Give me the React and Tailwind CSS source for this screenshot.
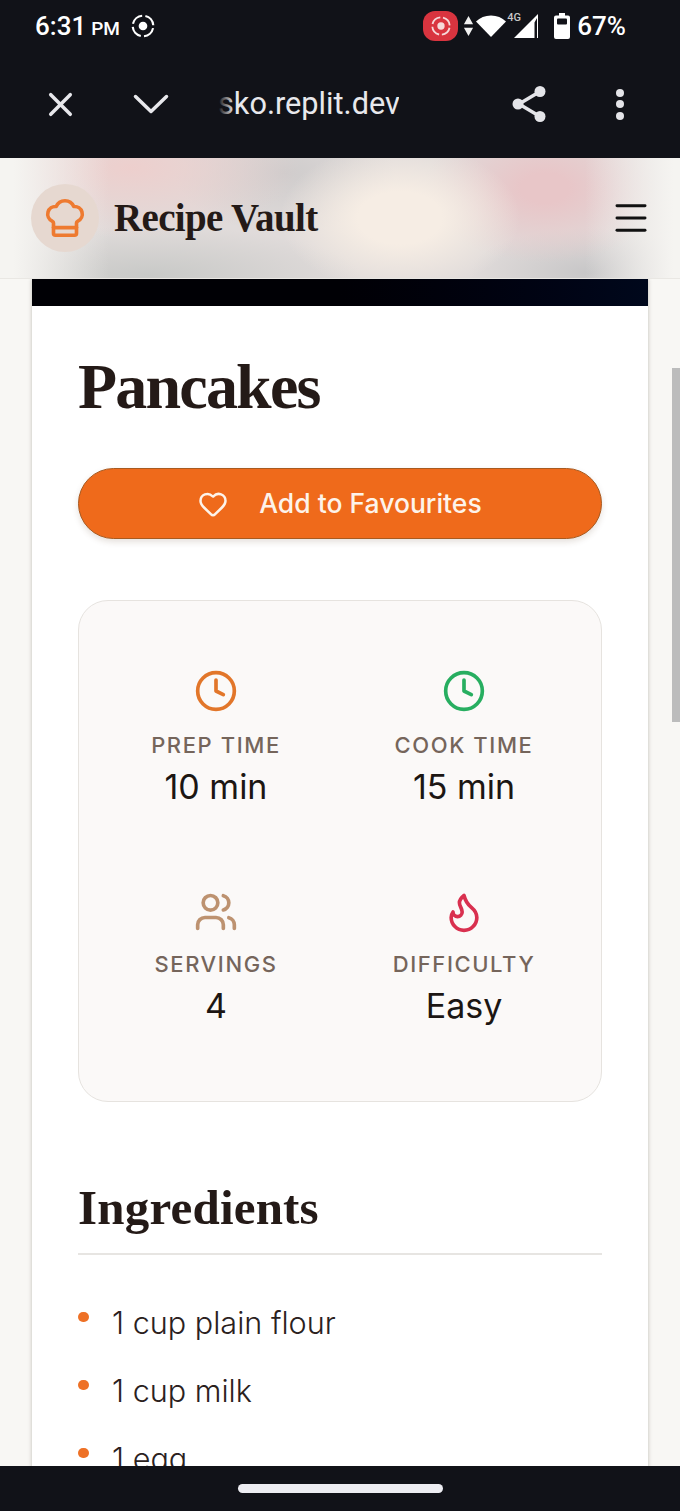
import React from "react";
import { ChefHat, Clock, Users, Flame, Heart, X, Menu } from "lucide-react";

const serif = "font-['Liberation_Serif',serif]";

function RecordIcon({ className, color = "white" }) {
  return (
    <svg viewBox="0 0 24 24" className={className} fill="none" stroke={color} strokeWidth="2">
      <circle cx="12" cy="12" r="4" fill={color} stroke="none" />
      <circle cx="12" cy="12" r="9.500" strokeDasharray="11.900 3" transform="rotate(12 12 12)" />
    </svg>
  );
}

function StatusBar() {
  return (
    <div className="flex h-[50px] items-center pl-[35px] pr-[54px] pt-px font-['Roboto',sans-serif] text-white">
      <span className="text-[26px] font-medium leading-none">6:31</span>
      <span className="ml-[5px] mt-[5px] text-[19px] font-medium leading-none">PM</span>
      <RecordIcon className="ml-[10px] h-[26px] w-[26px]" />
      <div className="ml-auto flex items-center">
        <div className="flex h-[30px] w-[35px] items-center justify-center rounded-[12px] bg-[#d9343f]">
          <RecordIcon className="h-[22px] w-[22px]" color="#f6d9da" />
        </div>
        <svg viewBox="0 0 12 24" className="ml-[5px] h-[24px] w-[11px]" fill="#f1f1f1">
          <path d="M6 1l5 9H1zM6 23l-5-9h10z" />
        </svg>
        <svg viewBox="0 0 30 24" className="ml-[2px] h-[24px] w-[30px]" fill="white">
          <path d="M15 23L0 7.500C4 3.500 9 1.500 15 1.500s11 2 15 6z" />
        </svg>
        <div className="relative h-[26px] w-[33px]">
          <span className="absolute left-[1px] top-[-1px] text-[11px] font-medium leading-none text-[#c8c8c8]">4G</span>
          <svg viewBox="0 0 26 26" className="absolute right-0 top-0 h-[26px] w-[26px]" fill="white">
            <path d="M25 1v24H1zM21.500 9.500L21.500 25H24V5z" fillRule="evenodd" />
          </svg>
        </div>
        <svg viewBox="0 0 16 26" className="ml-[15px] h-[26px] w-[16px]" fill="white">
          <path d="M5 0h6v2.500h3a2 2 0 0 1 2 2V24a2 2 0 0 1-2 2H2a2 2 0 0 1-2-2V4.500a2 2 0 0 1 2-2h3z" />
          <rect x="3" y="5.500" width="10" height="6" rx="1" fill="#111218" />
        </svg>
        <span className="ml-[7px] text-[26px] font-medium leading-none">67%</span>
      </div>
    </div>
  );
}

function BrowserBar() {
  return (
    <div className="flex h-[108px] items-center font-['Roboto',sans-serif] text-[#e8e8ec]">
      <X className="ml-[41px] h-[39px] w-[39px]" strokeWidth={2.2} />
      <svg viewBox="0 0 38 24" className="ml-[52px] h-[24px] w-[38px]" fill="none" stroke="#e8e8ec" strokeWidth="3.500" strokeLinecap="round" strokeLinejoin="round">
        <path d="M3.500 4.500L19 19.500L34.500 4.500" />
      </svg>
      <div className="relative ml-[48px] w-[181px] overflow-hidden">
        <span className="block whitespace-nowrap text-[30.700px] leading-[40px]">sko.replit.dev</span>
        <div className="absolute inset-y-0 left-0 w-[16px] bg-gradient-to-r from-[#111218] to-transparent" />
      </div>
      <svg viewBox="0 0 38 40" className="ml-[112px] h-[40px] w-[38px]" fill="#e4e4e8" stroke="#e4e4e8">
        <path d="M29 7.500L8 20l21 12.500" fill="none" strokeWidth="3.500" />
        <circle cx="29" cy="7.500" r="5.500" stroke="none" />
        <circle cx="7" cy="20" r="5.500" stroke="none" />
        <circle cx="29" cy="32.500" r="5.500" stroke="none" />
      </svg>
      <div className="ml-[67px] flex flex-col gap-[3.500px]">
        <span className="h-[8px] w-[8px] rounded-full bg-[#e4e4e8]" />
        <span className="h-[8px] w-[8px] rounded-full bg-[#e4e4e8]" />
        <span className="h-[8px] w-[8px] rounded-full bg-[#e4e4e8]" />
      </div>
    </div>
  );
}

function AppHeader() {
  return (
    <header className="relative z-10 flex h-[121px] shrink-0 items-center overflow-hidden border-b border-[#e9e7e3] bg-[#e0dbda] pl-[31px] pr-[28px] pb-[1px]">
      <div className="absolute inset-0 bg-[linear-gradient(to_right,#f5f4f1_0%,#f5f4f1_2%,rgba(245,244,241,0)_16%,rgba(245,244,241,0)_86%,#f5f4f1_99%),radial-gradient(ellipse_120px_75px_at_400px_60px,#f6ede4_0%,#f6ede4_35%,rgba(246,237,228,0)_100%),radial-gradient(ellipse_120px_75px_at_545px_30px,#e8c6c8_0%,#e8c6c8_20%,rgba(232,198,200,0)_100%),radial-gradient(ellipse_170px_70px_at_130px_10px,#edcfcd_0%,rgba(237,207,205,0)_100%),radial-gradient(ellipse_210px_50px_at_150px_118px,#c8c9c7_0%,rgba(200,201,199,0)_100%),radial-gradient(ellipse_120px_45px_at_590px_115px,#c7c6c7_0%,rgba(199,198,199,0)_100%),radial-gradient(ellipse_110px_60px_at_285px_15px,#cfcccc_0%,rgba(207,204,204,0)_100%)]" />
      <div className="relative flex h-[68px] w-[68px] items-center justify-center rounded-full bg-[#e6d8d0]">
        <ChefHat className="h-[46px] w-[46px] text-[#ee7a30]" strokeWidth={1.9} />
      </div>
      <span className={`relative ml-[15px] ${serif} text-[39px] font-bold leading-none tracking-[-0.65px] text-[#241a17]`}>Recipe Vault</span>
      <Menu className="relative ml-auto h-[42px] w-[42px] text-[#111111]" strokeWidth={1.7} />
    </header>
  );
}

function Stat({ icon: Icon, iconClass, label, value }) {
  return (
    <div className="flex flex-col items-center">
      <Icon className={`h-[44px] w-[44px] ${iconClass}`} strokeWidth={2} />
      <span className="mt-[16px] font-['Inter',sans-serif] text-[22px] font-medium uppercase leading-[32px] tracking-[1.6px] text-[#75655b]">{label}</span>
      <span className="mt-[4px] font-['Inter',sans-serif] text-[34px] leading-[44px] text-[#1c1613]">{value}</span>
    </div>
  );
}

function Ingredient({ children }) {
  return (
    <li className="flex h-[68px] shrink-0 items-start">
      <span className="mt-[9px] h-[10px] w-[11px] shrink-0 rounded-full bg-[#ee7126]" />
      <span className="ml-[23px] font-['Inter',sans-serif] text-[30.600px] font-light leading-[40px] text-[#2b211d]">{children}</span>
    </li>
  );
}

export default function App() {
  return (
    <div className="flex h-[1511px] w-[680px] flex-col overflow-hidden bg-[#f8f7f4]">
      <div className="shrink-0 bg-[#111218]">
        <StatusBar />
        <BrowserBar />
      </div>
      <AppHeader />
      <main className="relative min-h-0 flex-1 overflow-hidden px-[32px]">
        <div className="absolute right-0 top-[89px] h-[354px] w-[8px] bg-[#bcbcbc]" />
        <article className="bg-white shadow-[0_0_4px_rgba(60,50,40,0.3)]">
          <div className="h-[27px] bg-gradient-to-r from-[#000005] via-[#000005] to-[#00081c]" />
          <div className="px-[46px] pt-[48px]">
            <h1 className={`${serif} text-[64px] font-bold leading-[66px] tracking-[-1.8px] text-[#241a17]`}>Pancakes</h1>
            <button className="mt-[48px] flex h-[71px] w-full items-center justify-center rounded-full border border-[#a85a20] bg-[#ef6a1b] font-['Inter',sans-serif] text-[26.500px] font-medium text-[#fdf3ea] shadow-[0_3px_6px_rgba(80,50,20,0.15)]">
              <Heart className="h-[30px] w-[30px]" strokeWidth={2} />
              <span className="ml-[31px]">Add to Favourites</span>
            </button>
            <section className="mt-[61px] grid h-[502px] grid-cols-2 content-start gap-y-[79px] rounded-[30px] border border-[#e6e3df] bg-[#fbf9f8] px-[13px] pt-[68px]">
              <Stat icon={Clock} iconClass="text-[#e2762a]" label="Prep Time" value="10 min" />
              <Stat icon={Clock} iconClass="text-[#27ae60]" label="Cook Time" value="15 min" />
              <Stat icon={Users} iconClass="text-[#bd9270] mt-[2px] -mb-[2px]" label="Servings" value="4" />
              <Stat icon={Flame} iconClass="text-[#d9304f] mt-[2px] -mb-[2px]" label="Difficulty" value="Easy" />
            </section>
            <h2 className={`mt-[79px] ${serif} text-[49px] font-bold leading-[54px] tracking-[0.2px] text-[#241a17]`}>Ingredients</h2>
            <div className="mt-[18px] h-[2px] bg-[#e7e5e2]" />
            <ul className="mt-[48px] flex flex-col">
              <Ingredient>1 cup plain flour</Ingredient>
              <Ingredient>1 cup milk</Ingredient>
              <Ingredient>1 egg</Ingredient>
            </ul>
          </div>
        </article>
      </main>
      <div className="flex h-[45px] shrink-0 items-start justify-center bg-[#111218] pt-[18px]">
        <div className="h-[9px] w-[205px] rounded-full bg-[#ededf2]" />
      </div>
    </div>
  );
}
